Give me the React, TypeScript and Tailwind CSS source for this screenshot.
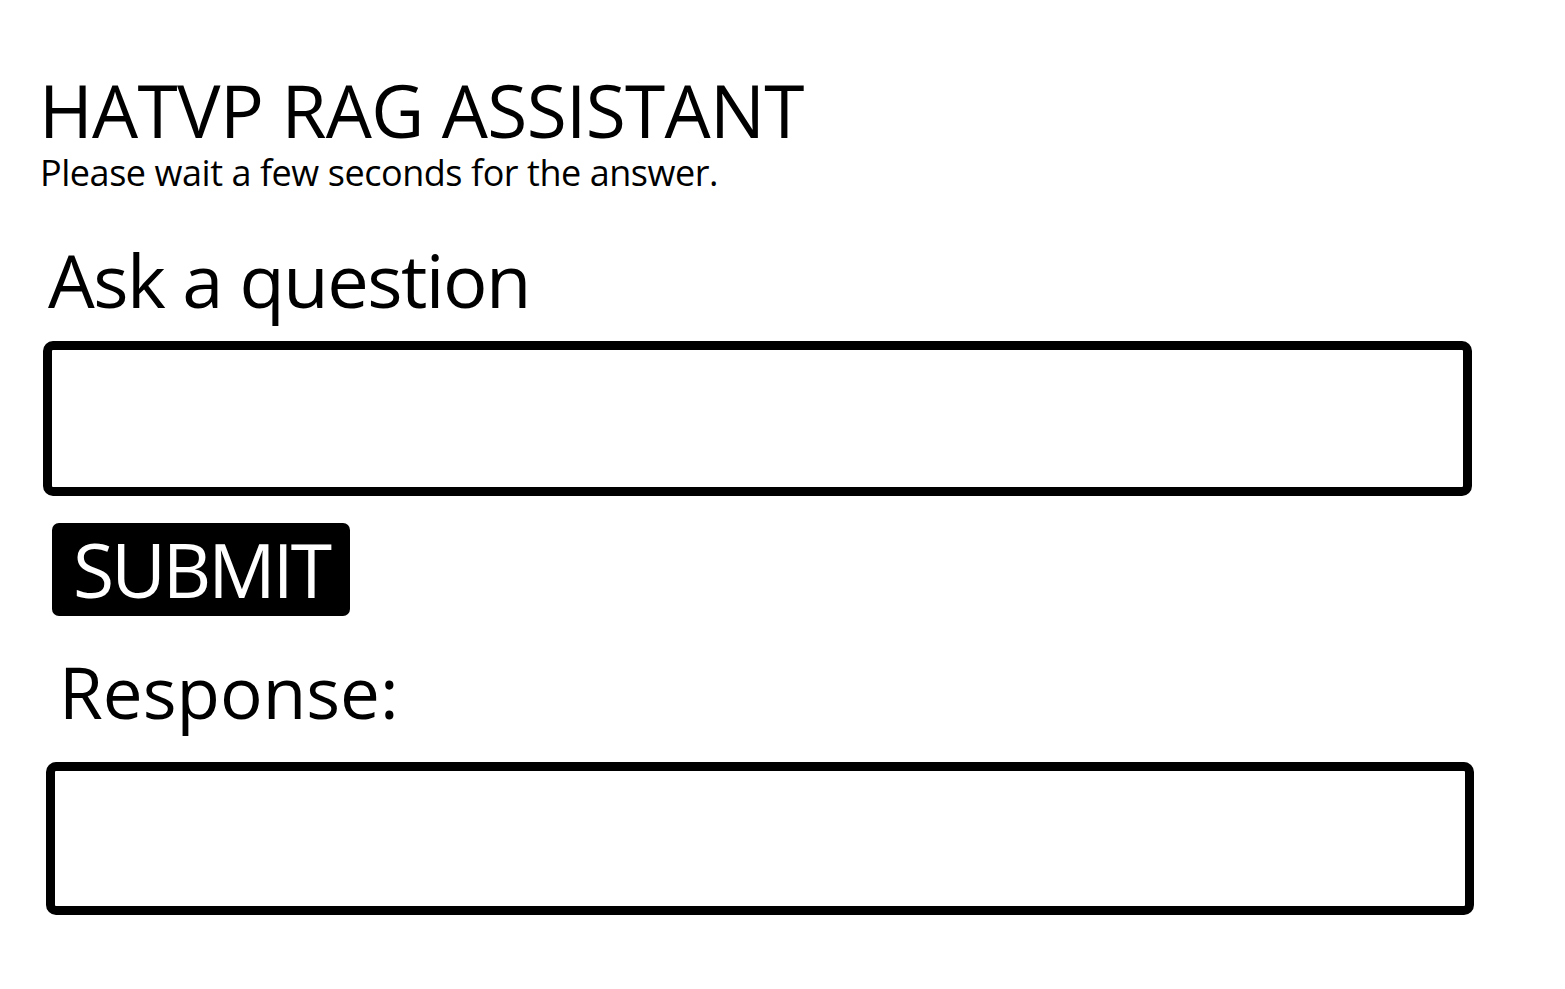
import React from "react";

export default function App() {
  return (
    <div className="min-h-[989px] w-[1565px] bg-white text-black" style={{ fontFamily: '"Open Sans", "Noto Sans", sans-serif' }}>
      <div className="flex flex-col items-start pt-[73px]">
        <h1 className="ml-[39px] text-[73px] font-normal leading-none tracking-[-0.7px]">HATVP RAG ASSISTANT</h1>
        <p className="ml-[40px] mt-[9px] text-[36px] leading-none tracking-[-0.45px]">Please wait a few seconds for the answer.</p>
        <h2 className="ml-[48px] mt-[52px] text-[74px] font-normal leading-none tracking-[-1.5px]">Ask a question</h2>
        <textarea className="ml-[43px] mt-[24px] h-[155px] w-[1429px] resize-none rounded-[10px] border-[9px] border-black bg-white outline-none" />
        <button className="ml-[52px] mt-[27px] flex h-[93px] w-[298px] items-center justify-center rounded-[7px] bg-black text-[75px] leading-none tracking-[-3px] text-white">
          SUBMIT
        </button>
        <h2 className="ml-[59px] mt-[40px] text-[71px] font-normal leading-none">Response:</h2>
        <div className="ml-[46px] mt-[35px] h-[153px] w-[1428px] rounded-[10px] border-[9px] border-black" />
      </div>
    </div>
  );
}
